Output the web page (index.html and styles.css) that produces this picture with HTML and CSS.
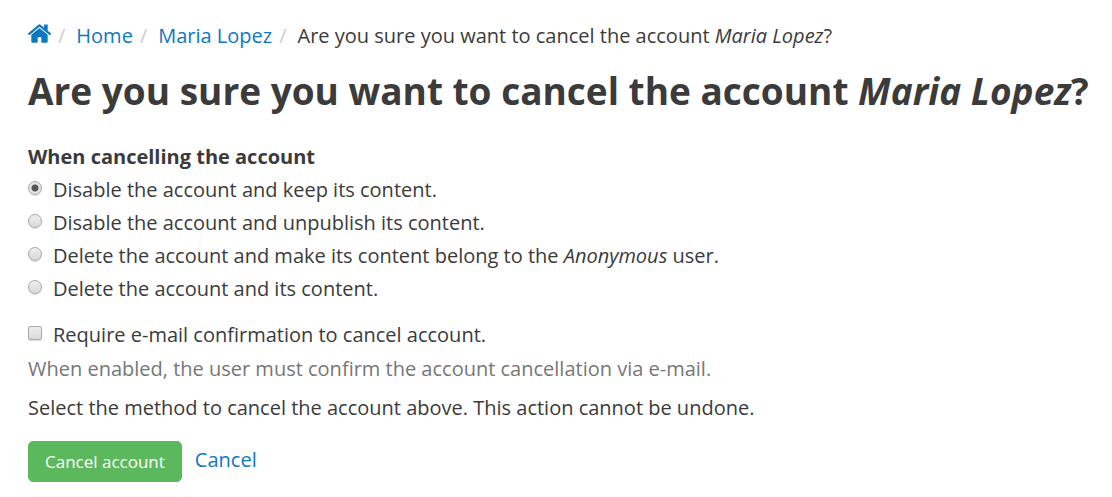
FILE: index.html
```html
<!DOCTYPE html>
<html lang="en">
<head>
<meta charset="utf-8">
<title>Cancel account</title>
<link rel="stylesheet" href="styles.css">
</head>
<body>
<main class="page">
<nav aria-label="Breadcrumb">
<ol class="breadcrumb">
<li><a href="#" class="home" aria-label="Front page"><svg class="home-icon" viewBox="88 253 1616 1283" aria-hidden="true"><path d="M1472 992v480q0 26-19 45t-45 19h-384v-384h-256v384h-384q-26 0-45-19t-19-45v-480q0-1 .5-3t.5-3l575-474 575 474q1 2 1 6zm223-69l-62 74q-8 9-21 11h-3q-13 0-21-7l-692-577-692 577q-12 8-24 7-13-2-21-11l-62-74q-8-10-7-23.500t11-21.500l719-599q32-26 76-26t76 26l244 204v-195q0-14 9-23t23-9h192q14 0 23 9t9 23v408l219 182q10 8 11 21.500t-7 23.500z"/></svg></a></li>
<li><a href="#">Home</a></li>
<li><a href="#">Maria Lopez</a></li>
<li aria-current="page">Are you sure you want to cancel the account <em>Maria Lopez</em>?</li>
</ol>
</nav>
<h1 class="title">Are you sure you want to cancel the account <em>Maria Lopez</em>?</h1>
<form class="form">
<fieldset class="methods">
<legend class="legend">When cancelling the account</legend>
<label class="option"><input class="control radio" type="radio" name="method" checked><span>Disable the account and keep its content.</span></label>
<label class="option"><input class="control radio" type="radio" name="method"><span>Disable the account and unpublish its content.</span></label>
<label class="option"><input class="control radio" type="radio" name="method"><span>Delete the account and make its content belong to the <em>Anonymous</em> user.</span></label>
<label class="option"><input class="control radio" type="radio" name="method"><span>Delete the account and its content.</span></label>
</fieldset>
<label class="option"><input class="control checkbox" type="checkbox" aria-describedby="confirm-help"><span>Require e-mail confirmation to cancel account.</span></label>
<p class="help" id="confirm-help">When enabled, the user must confirm the account cancellation via e-mail.</p>
<p class="note">Select the method to cancel the account above. This action cannot be undone.</p>
<div class="actions">
<button class="button" type="button">Cancel account</button>
<a class="cancel" href="#">Cancel</a>
</div>
</form>
</main>
</body>
</html>
```
FILE: styles.css
```css
* { box-sizing: border-box; }
body {
  margin: 0;
  background: #fff;
  color: #3b3b3b;
  font: 20px/28px "Open Sans", sans-serif;
}
a { color: #0d78be; text-decoration: none; }
.page { padding: 22px 0 15px 28px; }
.breadcrumb {
  display: flex;
  flex-wrap: wrap;
  margin: 0;
  padding: 0;
  list-style: none;
}
.breadcrumb li { display: flex; white-space: pre-wrap; }
.breadcrumb li + li::before {
  content: "/";
  color: #ccc;
  padding: 0 11px 0 7px;
}
.home-icon { display: block; width: 23px; height: 19px; margin-top: 2px; fill: currentColor; }
.title { margin: 17px 0 28px; font-size: 37px; line-height: 48px; font-weight: 700; }
.methods { margin: 0 0 13px; padding: 0; border: 0; min-width: 0; }
.legend { padding: 0; margin-bottom: 5px; font-weight: 700; }
.option { display: flex; gap: 11px; margin-bottom: 5px; }
.control {
  appearance: none;
  flex: none;
  width: 14px;
  height: 14px;
  margin: 5px 0 0;
  border: 1px solid #a9a9a9;
  background: linear-gradient(#eee, #d9d9d9);
  box-shadow: 0 1px 1px #ddd;
}
.radio { border-radius: 50%; }
.radio:checked { background: radial-gradient(circle, #555 0 3px, #e4e4e4 4px); }
.checkbox { border-radius: 2px; }
.checkbox:checked { background: #555; }
.help { margin: 6px 0 11px; color: #777; }
.note { margin: 0 0 19px; }
.actions { display: flex; align-items: center; gap: 13px; }
.button {
  padding: 7px 16px;
  border: 1px solid #5cb85c;
  border-radius: 5px;
  background: #5cb85c;
  color: #fff;
  font: 17px/25px "Open Sans", sans-serif;
}
.cancel { padding-bottom: 3px; }
```
